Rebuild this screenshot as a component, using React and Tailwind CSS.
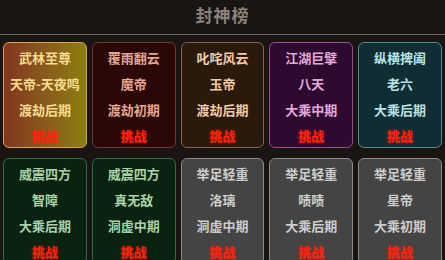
import React from 'react';

const cards = [
  { title: '武林至尊', name: '天帝-天夜鸣', stage: '渡劫后期', box: 'bg-gradient-to-r from-[#82351f] to-[#8c7d10] border-[#d9a54a]', text: 'text-[#f6dc8c]' },
  { title: '覆雨翻云', name: '魔帝', stage: '渡劫初期', box: 'bg-[#2b0806] border-[#6e3a30]', text: 'text-[#e6a690]' },
  { title: '叱咤风云', name: '玉帝', stage: '渡劫后期', box: 'bg-[#2a1a0c] border-[#8a6444]', text: 'text-[#f2c9a4]' },
  { title: '江湖巨擘', name: '八天', stage: '大乘中期', box: 'bg-[#2e0a31] border-[#9a4c98]', text: 'text-[#e4a8d8]' },
  { title: '纵横捭阖', name: '老六', stage: '大乘后期', box: 'bg-[#0f2d32] border-[#4b8a90]', text: 'text-[#b6e2e4]' },
  { title: '威震四方', name: '智障', stage: '大乘后期', box: 'bg-[#0a2210] border-[#2d6e3a]', text: 'text-[#a6d2a6]' },
  { title: '威震四方', name: '真无敌', stage: '洞虚中期', box: 'bg-[#0a2210] border-[#2d6e3a]', text: 'text-[#a6d2a6]' },
  { title: '举足轻重', name: '洛璃', stage: '洞虚中期', box: 'bg-[#444444] border-[#8a8a8a]', text: 'text-[#cccccc]' },
  { title: '举足轻重', name: '啧啧', stage: '大乘后期', box: 'bg-[#444444] border-[#8a8a8a]', text: 'text-[#cccccc]' },
  { title: '举足轻重', name: '星帝', stage: '大乘初期', box: 'bg-[#444444] border-[#8a8a8a]', text: 'text-[#cccccc]' },
];

export default function App() {
  return (
    <div className="w-[445px] h-[260px] overflow-hidden bg-[#1a1512] font-['Noto_Sans_CJK_SC',sans-serif]">
      <div className="h-[35px] flex items-center justify-center border-b border-[#6e6862] pb-[4px]">
        <h1 className="text-[17px] font-bold text-[#8c847c] tracking-[1px]">封神榜</h1>
      </div>
      <div className="grid grid-cols-5 gap-x-[5px] gap-y-[10px] px-[3px] pt-[7px]">
        {cards.map((c, i) => (
          <div key={i} className={`h-[106px] rounded-[6px] border flex flex-col items-center pt-[2px] ${c.box}`}>
            <div className={`h-[26px] leading-[26px] text-[13px] font-bold ${c.text}`}>{c.title}</div>
            <div className={`h-[26px] leading-[26px] text-[13px] font-bold whitespace-nowrap ${c.text}`}>{c.name}</div>
            <div className={`h-[26px] leading-[26px] text-[13px] font-bold ${c.text}`}>{c.stage}</div>
            <div className="h-[26px] leading-[26px] text-[13px] font-bold text-[#ff2410] [text-shadow:0_0_3px_rgba(255,30,0,0.7)]">挑战</div>
          </div>
        ))}
      </div>
    </div>
  );
}
